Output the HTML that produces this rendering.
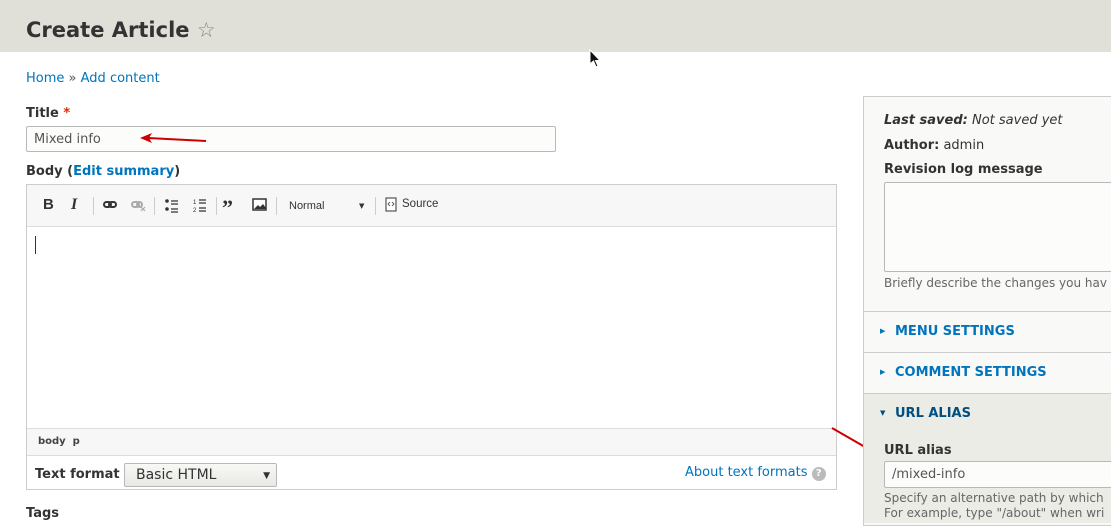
<!DOCTYPE html>
<html><head><meta charset="utf-8"><style>
*{box-sizing:border-box;margin:0;padding:0}
body{width:1111px;height:520px;overflow:hidden;background:#fff;font-family:"DejaVu Sans","Liberation Sans",sans-serif;color:#333;position:relative;font-size:13px}
.a{position:absolute}
a,.lnk{color:#0074bd;text-decoration:none}
.hdr{left:0;top:0;width:1111px;height:52px;background:#e0e0d8}
h1{position:absolute;left:26px;top:18px;font-size:21px;font-weight:bold;color:#333;white-space:nowrap}
.lbl{font-weight:bold;font-size:13px;color:#333}
.inp{border:1px solid #b8b8b8;border-radius:2px;background:#fcfcfa;font-size:13px;color:#555;padding:0 7px;line-height:26px}
.tb span{position:absolute;top:0}
.sh{font-size:13px;font-weight:bold;color:#0074bd}
.tri{position:absolute;left:880px;font-size:7px}
</style></head><body>
<div class="a hdr"></div>
<h1>Create Article <span style="font-weight:normal;color:#888;font-size:21px">☆</span></h1>
<svg class="a" style="left:589px;top:49px" width="12" height="20" viewBox="0 0 12 20"><path d="M1 1 L1 15 L4.5 12 L7 18 L9 17 L6.5 11.5 L11 11.5 Z" fill="#111" stroke="#fff" stroke-width="1"/></svg>
<div class="a" style="left:26px;top:71px;font-size:13px"><a>Home</a> <span style="color:#555">»</span> <a>Add content</a></div>

<div class="a lbl" style="left:26px;top:106px">Title <span style="color:#e32700">*</span></div>
<div class="a inp" style="left:26px;top:126px;width:530px;height:26px">Mixed info</div>
<svg class="a" style="left:138px;top:131px" width="70" height="14"><path d="M68 10 L10 7" stroke="#c00" stroke-width="2"/><path d="M2 7 L14 2 L11 7 L14 12 Z" fill="#c00"/></svg>

<div class="a lbl" style="left:26px;top:164px">Body (<span class="lnk">Edit summary</span>)</div>
<div class="a" style="left:26px;top:184px;width:811px;height:306px;border:1px solid #ccc;background:#fff"></div>
<div class="a" style="left:27px;top:185px;width:809px;height:42px;background:#f7f7f7;border-bottom:1px solid #ddd"></div>
<div class="a tb" style="left:0;top:196px;font-size:13px;height:20px">
<span style="left:43px;top:0;font-weight:bold;font-family:'Liberation Sans';font-size:15px">B</span>
<span style="left:71px;top:0;font-style:italic;font-weight:bold;font-family:'Liberation Serif';font-size:16px">I</span>
<span style="left:93px;top:1px;width:1px;height:18px;background:#ccc"></span>
<span style="left:154px;top:1px;width:1px;height:18px;background:#ccc"></span>
<span style="left:216px;top:1px;width:1px;height:18px;background:#ccc"></span>
<span style="left:276px;top:1px;width:1px;height:18px;background:#ccc"></span>
<span style="left:289px;top:4px;font-size:11px;font-family:'Liberation Sans';color:#333">Normal</span>
<span style="left:359px;top:6px;font-size:7px">▼</span>
<span style="left:375px;top:1px;width:1px;height:18px;background:#ccc"></span>
<span style="left:402px;top:2px;font-size:11.5px;font-family:'Liberation Sans'">Source</span>
</div>
<svg class="a" style="left:0;top:184px" width="420" height="42">
<g fill="none" stroke="#333" stroke-width="2"><rect x="104" y="18" width="7" height="5" rx="2.5"/><rect x="109" y="18" width="7" height="5" rx="2.5"/></g>
<g fill="none" stroke="#aaa" stroke-width="2"><rect x="132" y="18" width="7" height="5" rx="2.5"/><rect x="137" y="18" width="5" height="5" rx="2.5"/></g>
<path d="M141 23 l4 4 m0 -4 l-4 4" stroke="#aaa" stroke-width="1.2"/>
<circle cx="167" cy="17" r="1.8" fill="#333"/><circle cx="167" cy="25" r="1.8" fill="#333"/>
<path d="M171 17h7M171 20h7M171 25h7M171 28h7" stroke="#333" stroke-width="1.2" fill="none"/>
<path d="M199 16h7M199 19h7M199 24h7M199 27h7" stroke="#333" stroke-width="1.2"/>
<text x="193" y="20" font-size="6" fill="#333" font-family="Liberation Sans">1</text><text x="193" y="28" font-size="6" fill="#333" font-family="Liberation Sans">2</text>
<text x="222" y="31" font-size="22" font-weight="bold" fill="#333" font-family="Liberation Serif">”</text>
<rect x="253" y="15" width="13" height="11" fill="#fff" stroke="#333" stroke-width="1.5"/><path d="M254 25 l4-4 2 2 3-3 3 4v1z" fill="#333"/>
<rect x="386" y="14" width="10" height="13" fill="#fff" stroke="#333"/><path d="M390 18l-2 2 2 2M392 18l2 2-2 2" stroke="#333" fill="none" stroke-width=".8"/>
</svg>
<div class="a" style="left:35px;top:236px;width:1px;height:18px;background:#333"></div>
<div class="a" style="left:27px;top:428px;width:809px;height:28px;background:#f7f7f7;border-top:1px solid #ddd;border-bottom:1px solid #ddd;font-size:10px;font-weight:bold;padding:7px 0 0 11px;color:#444">body &nbsp;p</div>
<div class="a lbl" style="left:35px;top:467px">Text format</div>
<div class="a" style="left:124px;top:463px;width:153px;height:24px;border:1px solid #b8b8b8;border-radius:2px;background:linear-gradient(#f8f8f6,#e8e8e4);font-size:14px;padding:3px 0 0 11px">Basic HTML<span style="position:absolute;right:6px;top:7px;font-size:9px">▼</span></div>
<div class="a lnk" style="left:685px;top:465px;font-size:13px">About text formats <span style="display:inline-block;width:14px;height:14px;border-radius:7px;background:#bbb;color:#fff;font-size:10px;text-align:center;line-height:14px;font-weight:bold">?</span></div>
<div class="a lbl" style="left:26px;top:506px">Tags</div>

<svg class="a" style="left:830px;top:426px" width="52" height="32"><path d="M2 2 L42 25" stroke="#c00" stroke-width="2"/><path d="M50 30 L36 27 L42 21 Z" fill="#c00"/></svg>

<div class="a" style="left:863px;top:96px;width:260px;height:430px;border:1px solid #ccc;background:#f9f9f7"></div>
<div class="a" style="left:884px;top:113px;white-space:nowrap"><i><b>Last saved:</b> Not saved yet</i></div>
<div class="a" style="left:884px;top:138px"><b>Author:</b> admin</div>
<div class="a lbl" style="left:884px;top:162px">Revision log message</div>
<div class="a" style="left:884px;top:182px;width:240px;height:90px;border:1px solid #b8b8b8;border-radius:2px;background:#fcfcfa"></div>
<div class="a" style="left:884px;top:276px;color:#666;font-size:12px;white-space:nowrap">Briefly describe the changes you hav</div>
<div class="a" style="left:864px;top:311px;width:260px;height:41px;border-top:1px solid #ccc"></div>
<div class="a tri sh" style="top:327px">▶</div><div class="a sh" style="left:895px;top:324px">MENU SETTINGS</div>
<div class="a" style="left:864px;top:352px;width:260px;height:41px;border-top:1px solid #ccc"></div>
<div class="a tri sh" style="top:368px">▶</div><div class="a sh" style="left:895px;top:365px">COMMENT SETTINGS</div>
<div class="a" style="left:864px;top:393px;width:260px;height:130px;border-top:1px solid #ccc;background:#ececE6"></div>
<div class="a tri sh" style="top:409px;color:#004f80">▼</div><div class="a sh" style="left:895px;top:406px;color:#004f80">URL ALIAS</div>
<div class="a lbl" style="left:884px;top:443px">URL alias</div>
<div class="a inp" style="left:884px;top:461px;width:240px;height:27px;line-height:25px">/mixed-info</div>
<div class="a" style="left:884px;top:491px;color:#666;font-size:12px;white-space:nowrap;line-height:15px">Specify an alternative path by which<br>For example, type "/about" when wri</div>
</body></html>
